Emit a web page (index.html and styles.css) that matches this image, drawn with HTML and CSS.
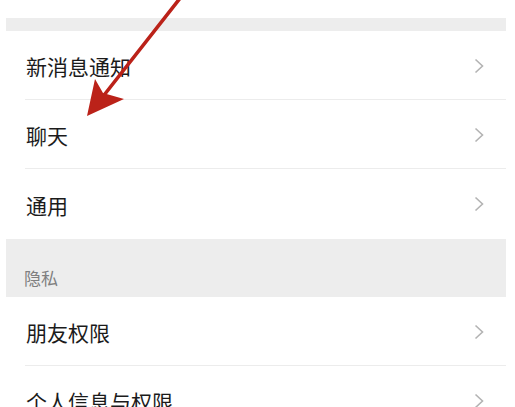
FILE: index.html
```html
<!DOCTYPE html>
<html lang="zh">
<head>
<meta charset="utf-8">
<link rel="stylesheet" href="styles.css">
</head>
<body>
<div class="page">
  <div class="prev-row"></div>
  <div class="gap"></div>
  <div class="row"><span class="label">新消息通知</span><svg class="chev" viewBox="0 0 10 16"><path d="M1.5 1.5 L8.5 8 L1.5 14.5"/></svg></div>
  <div class="row"><span class="label">聊天</span><svg class="chev" viewBox="0 0 10 16"><path d="M1.5 1.5 L8.5 8 L1.5 14.5"/></svg></div>
  <div class="row last"><span class="label">通用</span><svg class="chev" viewBox="0 0 10 16"><path d="M1.5 1.5 L8.5 8 L1.5 14.5"/></svg></div>
  <div class="section">隐私</div>
  <div class="row"><span class="label">朋友权限</span><svg class="chev" viewBox="0 0 10 16"><path d="M1.5 1.5 L8.5 8 L1.5 14.5"/></svg></div>
  <div class="row"><span class="label">个人信息与权限</span><svg class="chev" viewBox="0 0 10 16"><path d="M1.5 1.5 L8.5 8 L1.5 14.5"/></svg></div>
</div>
<svg class="arrow" viewBox="0 0 515 407" width="515" height="407">
  <line x1="181" y1="-3" x2="101" y2="99" stroke="#bb2219" stroke-width="3.6" stroke-linecap="round"/>
  <polygon points="87,116 95,79 103,93 124,99" fill="#bb2219"/>
</svg>
</body>
</html>
```

FILE: styles.css
```css
html, body {
  margin: 0;
  padding: 0;
  background: #ffffff;
  overflow: hidden;
}
body {
  width: 515px;
  height: 407px;
  position: relative;
  font-family: "Noto Sans CJK SC", "Noto Sans", sans-serif;
}
.page {
  width: 500px;
  margin-left: 6px;
  background: #ffffff;
}
.prev-row {
  height: 18px;
  background: #ffffff;
}
.gap {
  height: 13px;
  background: #ededed;
}
.row {
  height: 69px;
  box-sizing: border-box;
  display: flex;
  align-items: center;
  justify-content: space-between;
  padding: 0 22px 0 20px;
  position: relative;
  background: #ffffff;
}
.row::after {
  content: "";
  position: absolute;
  left: 19px;
  right: 0;
  bottom: 0;
  height: 1px;
  background: #ececec;
}
.row.last {
  height: 70px;
}
.row.last::after {
  display: none;
}
.label {
  font-size: 21px;
  color: #1b1b1b;
  line-height: 1;
  margin-top: 2px;
}
.chev {
  width: 10px;
  height: 16px;
  fill: none;
  stroke: #b3b3b3;
  stroke-width: 1.6;
}
.section {
  height: 58px;
  box-sizing: border-box;
  background: #ededed;
  color: #7f7f7f;
  font-size: 17px;
  line-height: 1;
  padding: 30px 0 0 18px;
}
.arrow {
  position: absolute;
  left: 0;
  top: 0;
}
```
